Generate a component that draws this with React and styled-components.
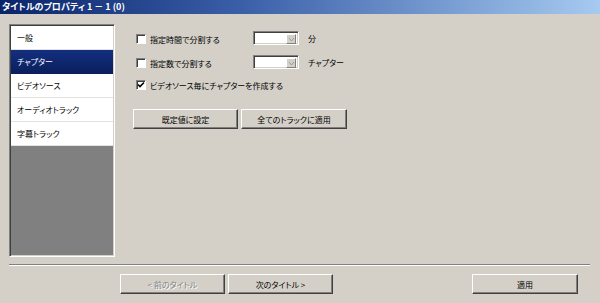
import React from "react";
import styled, { createGlobalStyle, css } from "styled-components";

const Global = createGlobalStyle`
  html, body { margin: 0; padding: 0; background: #D4D0C8; }
  body { font-family: "Noto Sans CJK JP", "Noto Sans", sans-serif; }
  * { box-sizing: border-box; }
`;

const Window = styled.div`
  width: 600px;
  height: 303px;
  background: #D4D0C8;
  display: flex;
  flex-direction: column;
  overflow: hidden;
  font-family: "Noto Sans CJK JP", sans-serif;
  font-feature-settings: "palt";
  color: #000;
`;

const TitleBar = styled.div`
  height: 14px;
  flex: none;
  background: linear-gradient(to right, #0A246A 0%, #3A5FA8 40%, #A6CAF0 100%);
  color: #fff;
  font-weight: bold;
  font-size: 9px;
  line-height: 14px;
  padding-left: 2px;
  white-space: nowrap;
`;

const Body = styled.div`
  display: flex;
  padding: 10px 9px 0 9px;
  gap: 18px;
`;

const Sidebar = styled.div`
  width: 106px;
  height: 233px;
  flex: none;
  background: #808080;
  border-top: 1px solid #808080;
  border-left: 1px solid #808080;
  border-right: 1px solid #fff;
  border-bottom: 1px solid #fff;
  box-shadow: inset 1px 1px 0 #404040, inset -1px -1px 0 #D4D0C8;
  padding: 1px 1px 1px 1px;
  display: flex;
  flex-direction: column;
`;

const Item = styled.div`
  height: 24px;
  flex: none;
  display: flex;
  align-items: center;
  padding-left: 6px;
  font-size: 8px;
  background: #fff;
  color: #000;
  border-bottom: 1px solid #E4E2DC;
  ${(p) =>
    p.$selected &&
    css`
      background: linear-gradient(#142f80, #0A1F5C);
      color: #fff;
      border-bottom-color: #0A1F5C;
    `}
`;

const Panel = styled.div`
  display: flex;
  flex-direction: column;
  padding-top: 7px;
`;

const Row = styled.div`
  display: flex;
  align-items: center;
  height: 14px;
  padding-left: 3px;
  margin-bottom: ${(p) => p.$gap}px;
`;

const CheckField = styled.label`
  display: flex;
  align-items: center;
  gap: 4px;
  width: ${(p) => (p.$wide ? "auto" : "117px")};
  font-size: 8px;
  white-space: nowrap;
  padding-top: 2px;
`;

const Box = styled.span`
  width: 10px;
  height: 10px;
  flex: none;
  background: #fff;
  border-top: 1px solid #808080;
  border-left: 1px solid #808080;
  border-right: 1px solid #fff;
  border-bottom: 1px solid #fff;
  box-shadow: inset 1px 1px 0 #404040;
  display: flex;
  align-items: center;
  justify-content: center;
`;

const Combo = styled.div`
  width: 46px;
  height: 14px;
  flex: none;
  background: #fff;
  border-top: 1px solid #808080;
  border-left: 1px solid #808080;
  border-right: 1px solid #fff;
  border-bottom: 1px solid #fff;
  box-shadow: inset 1px 1px 0 #404040, inset -1px -1px 0 #D4D0C8;
  display: flex;
  justify-content: flex-end;
  padding: 2px;
`;

const DropBtn = styled.div`
  width: 10px;
  height: 10px;
  background: #D4D0C8;
  border-top: 1px solid #fff;
  border-left: 1px solid #fff;
  border-right: 1px solid #808080;
  border-bottom: 1px solid #808080;
  display: flex;
  align-items: center;
  justify-content: center;
`;

const Unit = styled.span`
  margin-left: 9px;
  font-size: 8px;
  white-space: nowrap;
`;

const ButtonRow = styled.div`
  display: flex;
  gap: 3px;
`;

const Button = styled.button`
  width: ${(p) => p.$w || 105}px;
  height: 20px;
  padding: 0;
  margin: 0;
  font-family: inherit;
  font-feature-settings: "palt";
  font-size: 8px;
  background: #D4D0C8;
  color: ${(p) => (p.disabled ? "#808080" : "#000")};
  text-shadow: ${(p) => (p.disabled ? "1px 1px 0 #fff" : "none")};
  border-top: 1px solid #fff;
  border-left: 1px solid #fff;
  border-right: 1px solid #404040;
  border-bottom: 1px solid #404040;
  box-shadow: inset -1px -1px 0 #808080;
  outline: none;
`;

const Separator = styled.div`
  margin: 7px 10px 0 9px;
  height: 2px;
  border-top: 1px solid #808080;
  border-bottom: 1px solid #fff;
`;

const Footer = styled.div`
  display: flex;
  align-items: center;
  gap: 3px;
  margin-top: 8px;
  padding: 0 22px 0 120px;
`;

const Spacer = styled.div`
  flex: 1;
`;

const Arrow = () => (
  <svg width="5" height="3" viewBox="0 0 5 3">
    <path d="M0 0 L2.5 3 L5 0" fill="none" stroke="#9a9a9a" strokeWidth="1" />
  </svg>
);

const Check = () => (
  <svg width="8" height="8" viewBox="0 0 8 8">
    <path d="M1 3.5 L3 5.5 L7 1.5" fill="none" stroke="#000" strokeWidth="1.6" />
  </svg>
);

const items = ["一般", "チャプター", "ビデオソース", "オーディオトラック", "字幕トラック"];

export default function App() {
  return (
    <Window>
      <Global />
      <TitleBar>タイトルのプロパティ 1 － 1 (0)</TitleBar>
      <Body>
        <Sidebar>
          {items.map((t, i) => (
            <Item key={t} $selected={i === 1}>
              {t}
            </Item>
          ))}
        </Sidebar>
        <Panel>
          <Row $gap={10}>
            <CheckField>
              <Box />
              指定時間で分割する
            </CheckField>
            <Combo>
              <DropBtn>
                <Arrow />
              </DropBtn>
            </Combo>
            <Unit>分</Unit>
          </Row>
          <Row $gap={8}>
            <CheckField>
              <Box />
              指定数で分割する
            </CheckField>
            <Combo>
              <DropBtn>
                <Arrow />
              </DropBtn>
            </Combo>
            <Unit>チャプター</Unit>
          </Row>
          <Row $gap={18}>
            <CheckField $wide>
              <Box>
                <Check />
              </Box>
              ビデオソース毎にチャプターを作成する
            </CheckField>
          </Row>
          <ButtonRow>
            <Button>既定値に設定</Button>
            <Button $w={106}>全てのトラックに適用</Button>
          </ButtonRow>
        </Panel>
      </Body>
      <Separator />
      <Footer>
        <Button disabled>&lt; 前のタイトル</Button>
        <Button>次のタイトル &gt;</Button>
        <Spacer />
        <Button $w={106}>適用</Button>
      </Footer>
    </Window>
  );
}
